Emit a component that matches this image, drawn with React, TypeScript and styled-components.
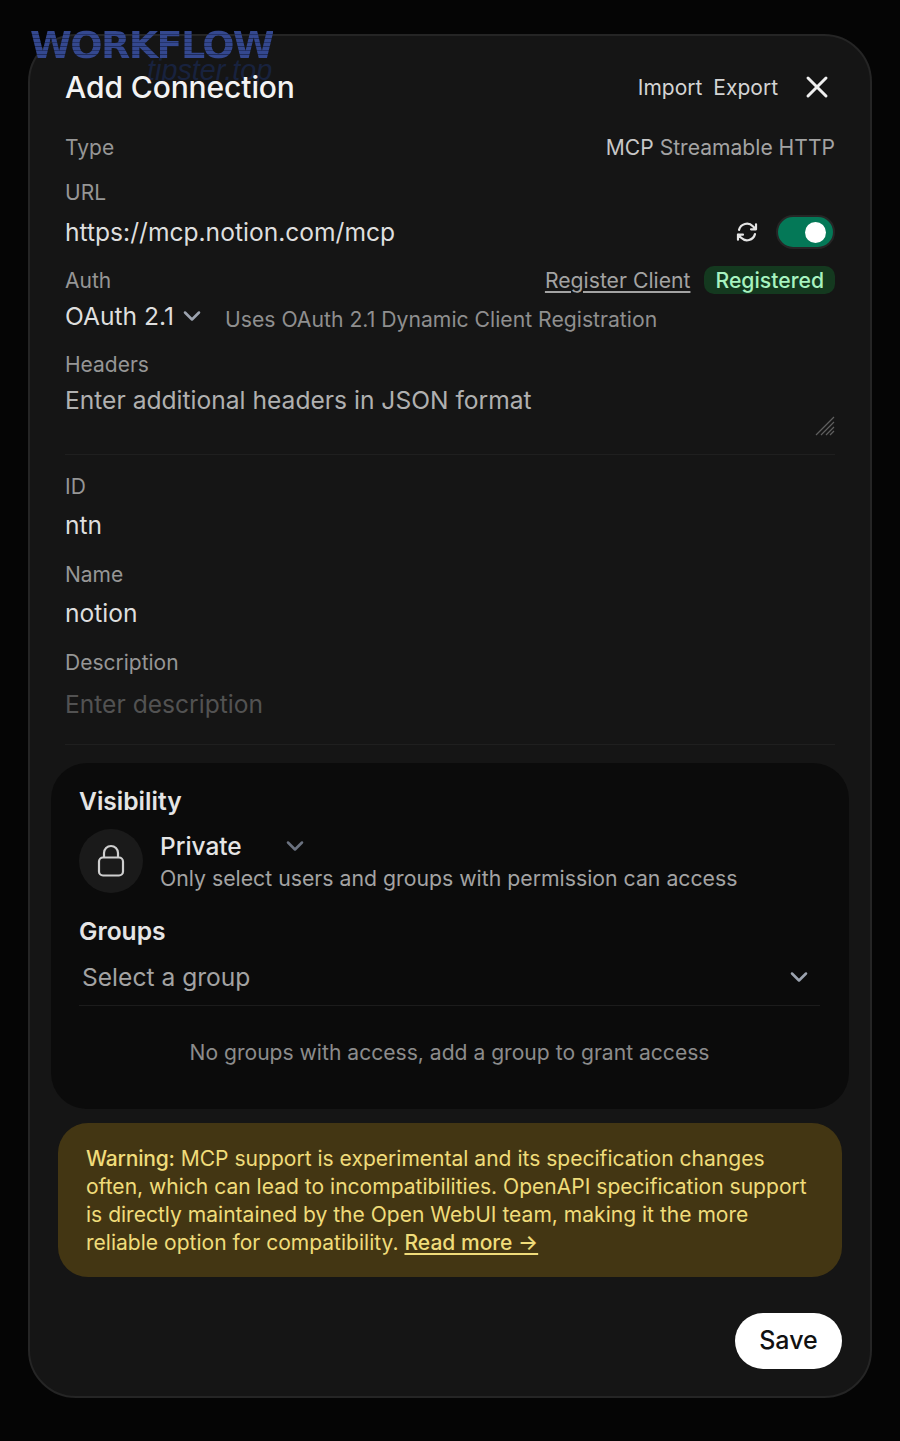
import React from "react";
import styled, { createGlobalStyle } from "styled-components";
import { X, ChevronDown } from "lucide-react";

const Global = createGlobalStyle`
  html, body { margin: 0; padding: 0; background: #050505; }
  body { font-family: Inter, "Noto Sans", sans-serif; color: #e5e5e5; }
  * { box-sizing: border-box; }
`;
const Page = styled.div`
  width: 900px; height: 1441px; padding: 34px 28px 43px; position: relative; overflow: hidden;
  background: #050505;
`;
const Modal = styled.div`
  height: 1364px; background: #151515; border: 2px solid #252525; border-radius: 48px;
  padding: 29px 28px 0 35px; display: flex; flex-direction: column;
`;
const Watermark = styled.div`
  position: absolute; left: 30px; top: 23px; font-family: "DejaVu Sans", sans-serif;
  font-weight: 700; font-size: 38px; letter-spacing: -1.6px; line-height: 44px; white-space: nowrap;
  color: transparent; z-index: 3;
  background: repeating-linear-gradient(180deg, #34488f 0 3px, #24336a 3px 4px, #34488f 4px 7px, #1f2c5c 7px 8px);
  -webkit-background-clip: text; background-clip: text;
`;
const SubMark = styled.div`
  position: absolute; left: 147px; top: 55px; color: #18223e; font-family: "Liberation Sans", sans-serif;
  font-style: italic; font-size: 28.8px; line-height: 30px; white-space: nowrap; z-index: 1;
`;
const Header = styled.div`
  display: flex; align-items: center; justify-content: space-between; height: 44px; padding-right: 7px;
`;
const Title = styled.div`
  font-size: 30px; font-weight: 500; color: #f3f3f3; letter-spacing: -0.1px; position: relative; z-index: 2;
`;
const HeaderActions = styled.div`
  display: flex; align-items: center; gap: 11px; color: #d4d4d4; font-size: 21px;
`;
const CloseWrap = styled.span`
  display: flex; margin-left: 10px; color: #f0f0f0;
`;
const Form = styled.div`
  display: flex; flex-direction: column; padding-right: 7px; margin-top: 23px;
`;
const Row = styled.div<{ $h: number; $mt?: number }>`
  display: flex; align-items: center; justify-content: space-between; height: ${p => p.$h}px;
  margin-top: ${p => p.$mt ?? 0}px;
`;
const Label = styled.div`
  font-size: 21px; color: #969696; line-height: 30px; margin-top: 2px;
`;
const TypeValue = styled.div`
  font-size: 21.1px; color: #a3a3a3; b { font-weight: 400; color: #c8c8c8; }
`;
const Value = styled.div<{ $muted?: boolean }>`
  font-size: 24.6px; color: ${p => (p.$muted ? "#525252" : "#dedede")}; line-height: 36px;
`;
const Right = styled.div`
  display: flex; align-items: center;
`;
const SyncIcon = styled.svg`
  color: #e5e5e5; margin-right: 17px;
`;
const Toggle = styled.div`
  width: 59px; height: 34px; border-radius: 17px; background: #047857; border: 2px solid #262626;
  display: flex; align-items: center; justify-content: flex-end; padding-right: 7px;
`;
const Knob = styled.div`
  width: 21px; height: 21px; border-radius: 50%; background: #fff;
`;
const RegisterLink = styled.span`
  font-size: 21.2px; color: #a3a3a3; text-decoration: underline; text-underline-offset: 3px; margin-right: 14px;
`;
const Badge = styled.span`
  background: #14391f; color: #a7f3c0; font-size: 21.2px; font-weight: 500; line-height: 28px; padding: 0 11px;
  border-radius: 10px;
`;
const AuthRow = styled.div`
  display: flex; align-items: center; height: 36px; margin-top: 3px;
`;
const AuthHint = styled.span`
  font-size: 21.2px; color: #8f8f8f; margin-left: 19px; margin-top: 6px;
`;
const Chevron = styled.span<{ $c?: string; $ml?: number }>`
  display: flex; color: ${p => p.$c ?? "#9ca3af"}; margin-left: ${p => p.$ml ?? 0}px;
`;
const TextArea = styled.div`
  position: relative; height: 72px; margin-top: 3px; font-size: 24.6px; color: #b0b0b0; line-height: 36px;
`;
const Grip = styled.svg`
  position: absolute; right: 0; bottom: 18px;
`;
const Rule = styled.div<{ $mt: number }>`
  height: 1px; background: #1f1f1f; margin-top: ${p => p.$mt}px;
`;
const Panel = styled.div`
  margin: 18px -1px 0 -14px; height: 346px; background: #0b0b0b; border-radius: 36px;
  padding: 20px 29px 0 28px; display: flex; flex-direction: column; width: 798px;
`;
const PanelTitle = styled.div`
  font-size: 24.6px; font-weight: 600; color: #e5e5e5; line-height: 36px;
`;
const VisRow = styled.div`
  display: flex; align-items: center; gap: 17px; margin-top: 10px;
`;
const LockCircle = styled.div`
  width: 64px; height: 64px; border-radius: 50%; background: #1a1a1a; display: flex; align-items: center;
  justify-content: center; color: #cfcfcf;
`;
const VisText = styled.div`
  display: flex; flex-direction: column;
`;
const VisTop = styled.div`
  display: flex; align-items: center; font-size: 24.4px; font-weight: 500; color: #e5e5e5; line-height: 34px;
`;
const VisHint = styled.div`
  font-size: 21.25px; color: #a3a3a3; line-height: 30px;
`;
const GroupsTitle = styled(PanelTitle)`
  margin-top: 20px;
`;
const SelectRow = styled.div`
  display: flex; align-items: center; justify-content: space-between; font-size: 24.6px; color: #a3a3a3;
  height: 57px; padding: 0 7px 1px 3px; border-bottom: 1px solid #1c1c1c;
`;
const Empty = styled.div`
  text-align: center; font-size: 21.1px; color: #8c8c8c; margin-top: 32px; line-height: 30px;
`;
const Warning = styled.div`
  margin: 14px 0 0 -7px; width: 784px; height: 154px; background: #433613; border-radius: 30px; padding: 22px 28px;
  color: #f0dc7a; font-size: 21.05px; line-height: 28px; b { font-weight: 500; letter-spacing: -0.2px; }
`;
const ReadMore = styled.span`
  font-weight: 500; text-decoration: underline; text-underline-offset: 3px;
`;
const Footer = styled.div`
  display: flex; justify-content: flex-end; margin-top: 36px; width: 777px;
`;
const Save = styled.button`
  width: 107px; height: 56px; border: 0; border-radius: 28px; background: #fff; color: #111; font-family: inherit;
  font-size: 25px; font-weight: 500; padding: 0 0 2px;
`;

export default function App() {
  return (
    <Page>
      <Global />
      <Modal>
        <Header>
          <Title>Add Connection</Title>
          <HeaderActions>
            <span>Import</span>
            <span>Export</span>
            <CloseWrap><X size={36} strokeWidth={2} /></CloseWrap>
          </HeaderActions>
        </Header>
        <Form>
          <Row $h={30}>
            <Label>Type</Label>
            <TypeValue><b>MCP</b> Streamable HTTP</TypeValue>
          </Row>
          <Row $h={30} $mt={15}><Label>URL</Label></Row>
          <Row $h={36} $mt={7}>
            <Value>https://mcp.notion.com/mcp</Value>
            <Right>
              <SyncIcon width="24" height="24" viewBox="0 0 24 24" fill="none" stroke="currentColor" strokeWidth="2.2" strokeLinecap="round" strokeLinejoin="round" aria-hidden="true">
                <path d="M16.023 9.348h4.992v-.001M2.985 19.644v-4.992m0 0h4.992m-4.993 0 3.181 3.183a8.25 8.25 0 0 0 13.803-3.7M4.031 9.865a8.25 8.25 0 0 1 13.803-3.7l3.181 3.182m0-4.991v4.99" />
              </SyncIcon>
              <Toggle><Knob /></Toggle>
            </Right>
          </Row>
          <Row $h={30} $mt={15}>
            <Label>Auth</Label>
            <Right>
              <RegisterLink>Register Client</RegisterLink>
              <Badge>Registered</Badge>
            </Right>
          </Row>
          <AuthRow>
            <Value>OAuth 2.1</Value>
            <Chevron $ml={4}><ChevronDown size={28} strokeWidth={2.2} /></Chevron>
            <AuthHint>Uses OAuth 2.1 Dynamic Client Registration</AuthHint>
          </AuthRow>
          <Row $h={30} $mt={15}><Label>Headers</Label></Row>
          <TextArea>
            Enter additional headers in JSON format
            <Grip width="20" height="20" viewBox="0 0 20 20" aria-hidden="true">
              <path d="M1 19L19 1M6 19L19 6M11 19L19 11M15 19L19 15" stroke="#5f5f5f" strokeWidth="1.2" />
            </Grip>
          </TextArea>
          <Rule $mt={0} />
          <Row $h={30} $mt={16}><Label>ID</Label></Row>
          <Row $h={36} $mt={6}><Value>ntn</Value></Row>
          <Row $h={30} $mt={16}><Label>Name</Label></Row>
          <Row $h={36} $mt={6}><Value>notion</Value></Row>
          <Row $h={30} $mt={16}><Label>Description</Label></Row>
          <Row $h={36} $mt={9}><Value $muted>Enter description</Value></Row>
          <Rule $mt={22} />
          <Panel>
            <PanelTitle>Visibility</PanelTitle>
            <VisRow>
              <LockCircle>
                <svg width="28" height="34" viewBox="0 0 28 34" fill="none" stroke="currentColor" strokeWidth="2.2" aria-hidden="true">
                  <rect x="2" y="13.5" width="24" height="18" rx="4" />
                  <path d="M7 13.5V9a7 7 0 0 1 14 0v4.5" />
                </svg>
              </LockCircle>
              <VisText>
                <VisTop>Private<Chevron $c="#6b7280" $ml={39}><ChevronDown size={28} strokeWidth={2.2} /></Chevron></VisTop>
                <VisHint>Only select users and groups with permission can access</VisHint>
              </VisText>
            </VisRow>
            <GroupsTitle>Groups</GroupsTitle>
            <SelectRow>
              Select a group
              <Chevron $c="#9ca3af"><ChevronDown size={28} strokeWidth={2.2} /></Chevron>
            </SelectRow>
            <Empty>No groups with access, add a group to grant access</Empty>
          </Panel>
          <Warning>
            <b>Warning:</b> MCP support is experimental and its specification changes often, which can lead to incompatibilities. OpenAPI specification support is directly maintained by the Open WebUI team, making it the more reliable option for compatibility. <ReadMore>Read more →</ReadMore>
          </Warning>
          <Footer><Save>Save</Save></Footer>
        </Form>
      </Modal>
      <SubMark>tipster.top</SubMark>
      <Watermark>WORKFLOW</Watermark>
    </Page>
  );
}
